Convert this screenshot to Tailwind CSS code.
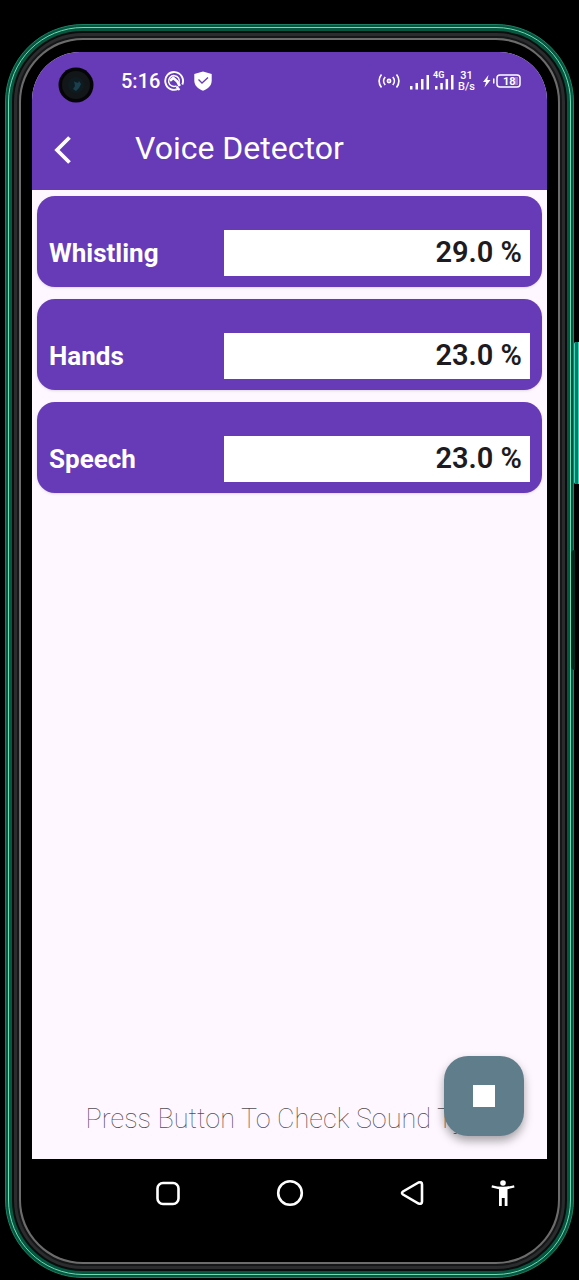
<!DOCTYPE html>
<html lang="en">
<head>
<meta charset="utf-8">
<meta name="viewport" content="width=device-width, initial-scale=1">
<title>Voice Detector</title>
<script src="https://cdn.jsdelivr.net/npm/@tailwindcss/browser@4"></script>
</head>
<body class="bg-black font-['Roboto',sans-serif]">
<div class="relative flex min-h-screen flex-col overflow-hidden bg-black px-[5px] pt-6 pb-[2px]">
  <!-- side button and the dark recess below it -->
  <div class="absolute top-[342px] right-0 h-[142px] w-[5px] rounded-l-xs border-x border-[#3fd9bd] bg-[#0d7a66]"></div>
  <div class="absolute top-[550px] right-[4px] h-[120px] w-[4px] rounded-l-sm bg-[#03291f]"></div>

  <!-- metal frame, from the outer edge inwards -->
  <div class="flex grow flex-col rounded-[78px] border border-[#1f8163] bg-[#07563f] p-[2px]">
    <div class="flex grow flex-col rounded-[75px] border border-[#6fdcb4] bg-[#07563f] p-[3px]">
      <div class="flex grow flex-col rounded-[71px] border-2 border-[#0b0c0d] bg-[#2b2c2e] p-[3px]">
        <div class="flex grow flex-col rounded-[66px] border-2 border-[#151617] bg-[#6c6c6c] p-[2px]">
          <div class="flex grow flex-col rounded-[62px] bg-black px-[11px] pt-[12px]">

            <div class="flex grow flex-col overflow-hidden rounded-t-[48px] bg-[#fef7ff]">
              <header class="bg-[#673ab7] text-white">
                <div class="flex h-[58px] items-center pr-[26px] pl-[26px]">
                  <svg class="mt-2 size-9" viewBox="0 0 36 36" aria-hidden="true">
                    <circle cx="18" cy="18" r="17.5" fill="#050507"/>
                    <circle cx="18" cy="18" r="14" fill="#131618"/>
                    <circle cx="18" cy="18" r="8" fill="#0e1c22"/>
                    <path d="M16 14.500l4 1.500 1-2 2 3-2 4-3 3-3-2 2-3z" fill="#1a3f4d"/>
                  </svg>
                  <span class="ml-[27px] text-[20px] leading-6 font-medium">5:16</span>
                  <svg class="ml-1 size-5" viewBox="0 0 20 20" fill="none" stroke="#fff" aria-hidden="true">
                    <path d="M14.500 17.700A8.900 8.900 0 1 1 18.300 13.500" stroke-width="1.900"/>
                    <path d="M12.500 14.800A5.400 5.400 0 1 1 15 12" stroke-width="1.500"/>
                    <path d="M6 9.800 9.300 7l4 3.500 2.500 4.500" stroke-width="2.600"/>
                    <path d="m12.500 15.500 3 3.500" stroke-width="2"/>
                  </svg>
                  <svg class="ml-[9px] size-5" viewBox="0 0 20 20" aria-hidden="true">
                    <path d="M10 .5 18.700 3v6.500c0 5-3.600 8.200-8.700 10.300C4.900 17.700 1.300 14.500 1.300 9.500V3z" fill="#fff"/>
                    <path d="m5.500 8.500 3.500 3.500L15 6.500" fill="none" stroke="#673ab7" stroke-width="1.300"/>
                  </svg>
                  <div class="ml-auto flex items-center">
                    <svg class="h-4 w-[22px]" viewBox="0 0 22 16" fill="none" stroke="#fff" stroke-width="1.700" aria-hidden="true">
                      <circle cx="11" cy="8" r="1.600"/>
                      <path d="M7.200 4a6 6 0 0 0 0 8M14.800 4a6 6 0 0 1 0 8M3.500 1.500a10 10 0 0 0 0 13M18.500 1.500a10 10 0 0 1 0 13"/>
                    </svg>
                    <svg class="ml-[10px] h-[22px] w-11" viewBox="0 0 44 22" fill="#fff" aria-hidden="true">
                      <path d="M0 16h2.500v3.500H0zM5.500 13H8v6.500H5.500zM11 9h2.500v10.500H11zM16.500 5H19v14.500h-2.500zM25 16h2.500v3.500H25zM30.300 13h2.500v6.500h-2.500zM35.600 9h2.500v10.500h-2.500zM41 5h2.500v14.500H41z"/>
                      <text x="23" y="8" font-size="9" font-weight="700">4G</text>
                    </svg>
                    <span class="ml-1 flex flex-col text-center text-[11px] leading-[11px] font-medium"><span>31</span><span>B/s</span></span>
                    <svg class="ml-2 h-4 w-[38px]" viewBox="0 0 38 16" aria-hidden="true">
                      <path d="M5.500 2 0 9h3l-1.500 5.500L7.500 7H4.300z" fill="#fff"/>
                      <path d="M10 5.500h1.500v5H10z" fill="#fff"/>
                      <path d="M32 4h3v8h-3z" fill="#9676d2"/>
                      <rect x="14" y="2" width="23" height="12" rx="3" fill="none" stroke="#fff" stroke-width="1.500"/>
                      <text x="20" y="12" font-size="11" font-weight="700" fill="#fff">18</text>
                    </svg>
                  </div>
                </div>
                <div class="flex h-20 items-center pl-4">
                  <button type="button" aria-label="Back" class="flex size-7 items-center justify-center">
                    <svg class="h-7 w-5" viewBox="0 0 20 28" fill="none" stroke="#fff" stroke-width="3.800"><path d="M17.500 1.500 5 14l12.500 12.500"/></svg>
                  </button>
                  <h1 class="ml-[59px] pb-1 text-[32px] leading-10 font-normal">Voice Detector</h1>
                </div>
              </header>

              <main class="relative flex grow flex-col px-[5px] pt-[6px]">
                <div class="flex flex-col gap-3">
                  <div class="rounded-[18px] bg-[#673ab7] px-3 pt-[34px] pb-[11px] shadow-sm">
                    <label class="flex items-center"><span class="grow text-[26px] leading-8 font-bold text-white">Whistling</span><input readonly value="29.0 %" class="h-[46px] w-[306px] bg-white px-2 pb-0.5 text-right text-[29px] font-semibold text-[#1d1b20]"></label>
                  </div>
                  <div class="rounded-[18px] bg-[#673ab7] px-3 pt-[34px] pb-[11px] shadow-sm">
                    <label class="flex items-center"><span class="grow text-[26px] leading-8 font-bold text-white">Hands</span><input readonly value="23.0 %" class="h-[46px] w-[306px] bg-white px-2 pb-0.5 text-right text-[29px] font-semibold text-[#1d1b20]"></label>
                  </div>
                  <div class="rounded-[18px] bg-[#673ab7] px-3 pt-[34px] pb-[11px] shadow-sm">
                    <label class="flex items-center"><span class="grow text-[26px] leading-8 font-bold text-white">Speech</span><input readonly value="23.0 %" class="h-[46px] w-[306px] bg-white px-2 pb-0.5 text-right text-[29px] font-semibold text-[#1d1b20]"></label>
                  </div>
                </div>
                <p class="mt-auto pb-[22px] text-center text-[27px] leading-9 font-thin text-[#1d1b20]/80">Press Button To Check Sound Type</p>
                <button type="button" aria-label="Stop" class="absolute right-[23px] bottom-[23px] flex size-20 items-center justify-center rounded-[24px] bg-[#607d8b] shadow-[0_5px_10px_rgba(0,0,0,0.35)]">
                  <span class="size-[22px] bg-white"></span>
                </button>
              </main>
            </div>

            <nav class="flex h-[103px] items-start pt-5 pl-[122px] text-white">
              <button type="button" aria-label="Recent apps" class="size-7"><svg viewBox="0 0 28 28" fill="none" stroke="#fff" stroke-width="2.600"><rect x="3.500" y="4" width="21" height="21" rx="5.500"/></svg></button>
              <button type="button" aria-label="Home" class="ml-[94px] size-7"><svg viewBox="0 0 28 28" fill="none" stroke="#fff" stroke-width="2.600"><circle cx="14" cy="14" r="11.800"/></svg></button>
              <button type="button" aria-label="Back" class="ml-[94px] size-7"><svg viewBox="0 0 28 28" fill="none" stroke="#fff" stroke-width="2.600"><path d="M20.500 3.500 5 12.500q-2 1.500 0 3l15.500 9q3.500 1 3.500-2v-17q0-3-3.500-2z"/></svg></button>
              <button type="button" aria-label="Accessibility" class="ml-[63px] size-7"><svg viewBox="0 0 28 28" fill="#fff"><circle cx="14" cy="4" r="2.800"/><path d="M3 6.200Q14 9.300 25 6.200l.5 2.400-7 1.600V27h-2.800v-8h-2.900v8H10V10.200L2.500 8.600z"/></svg></button>
            </nav>
          </div>
        </div>
      </div>
    </div>
  </div>
</div>
</body>
</html>
